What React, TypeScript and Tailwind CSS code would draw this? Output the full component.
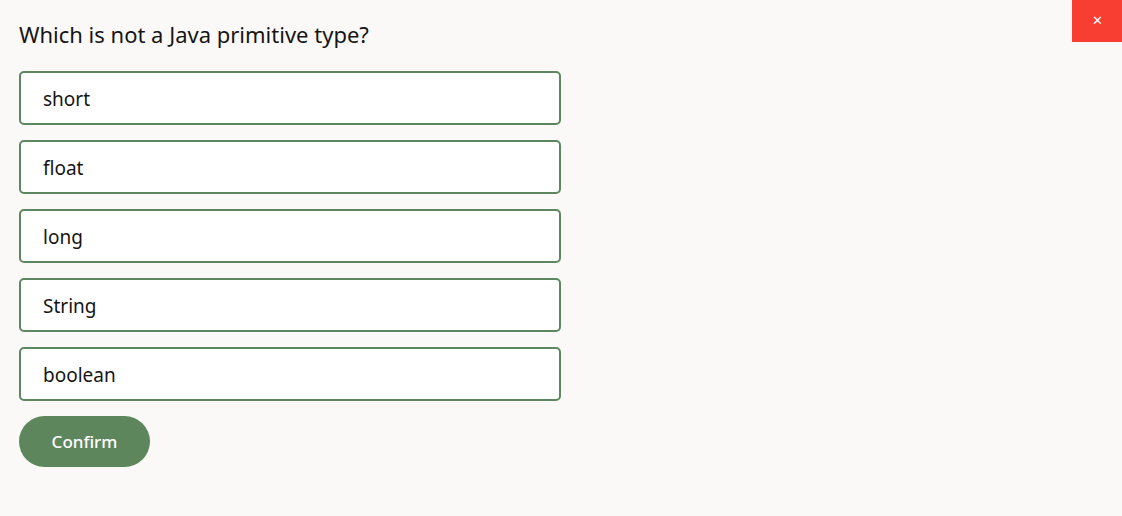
import React from 'react';

const options = ['short', 'float', 'long', 'String', 'boolean'];

export default function App() {
  const [picked, setPicked] = React.useState<string | null>(null);

  return (
    <div
      className="relative min-h-[516px] w-full bg-[#faf9f7] text-[#161513]"
      style={{ fontFamily: '"Noto Sans", "Open Sans", sans-serif' }}
    >
      <button className="absolute right-0 top-0 flex h-[42px] w-[50px] items-center justify-center bg-[#f83d33] text-[13px] text-white">
        ✕
      </button>

      <div className="ml-[19px] flex w-[542px] flex-col pt-[19px]">
        <h1 className="text-[22px] leading-[30px] font-normal">Which is not a Java primitive type?</h1>

        <div className="mt-[22px] flex flex-col gap-[15px]">
          {options.map((opt) => (
            <button
              key={opt}
              onClick={() => setPicked(opt)}
              className={
                'flex h-[54px] items-center rounded-[5px] border-2 border-[#5e875f] bg-white pl-[22px] pt-[3px] text-left text-[19px] ' +
                (picked === opt ? 'bg-[#eef3ee]' : '')
              }
            >
              {opt}
            </button>
          ))}
        </div>

        <button className="mt-[15px] flex h-[51px] w-[131px] items-center justify-center rounded-full bg-[#5e865d] text-[17px] font-medium text-white">
          Confirm
        </button>
      </div>
    </div>
  );
}
